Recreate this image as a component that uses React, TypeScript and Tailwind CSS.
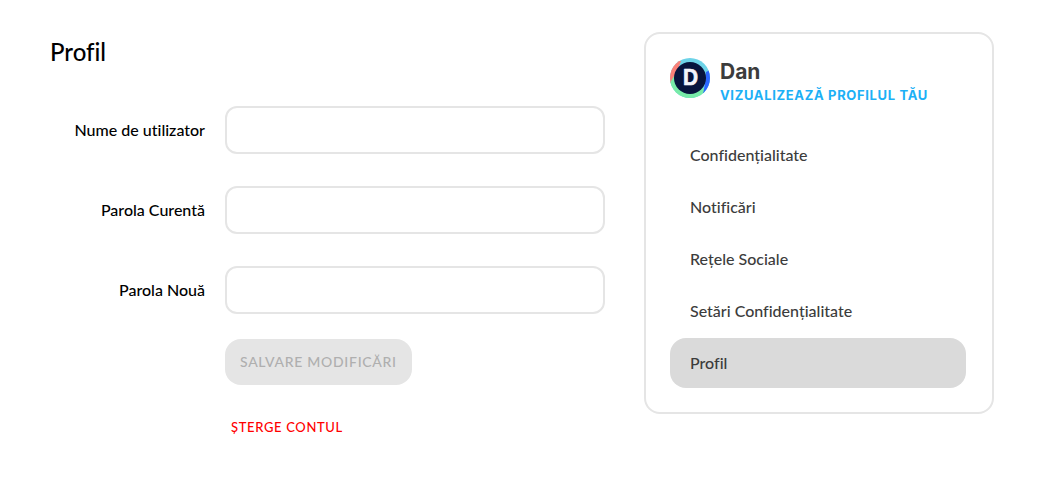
import { useId, useState } from 'react';

const links = ['Confidențialitate', 'Notificări', 'Rețele Sociale', 'Setări Confidențialitate', 'Profil'];

function Avatar() {
  return (
    <svg viewBox="0 0 40 40" className="size-10 shrink-0" role="img" aria-label="Dan">
      <defs>
        <clipPath id="avatar-clip">
          <circle cx="20" cy="20" r="20" />
        </clipPath>
      </defs>
      <g clipPath="url(#avatar-clip)">
        <rect width="40" height="40" fill="#6dd3e8" />
        <path d="M0 3H11L4 22L0 26Z" fill="#fa8078" />
        <path d="M0 25L4 18L18 32L36 30L34 40H0Z" fill="#78eba8" />
        <path d="M36 14L40 12V32L33 36L35 26Z" fill="#2b66ff" />
      </g>
      <circle cx="20" cy="20" r="16" fill="#07143d" />
      <text
        x="20.5"
        y="27"
        textAnchor="middle"
        fill="#f4f4fb"
        stroke="#f4f4fb"
        strokeWidth="0.6"
        strokeLinejoin="round"
        className="font-['Inter',sans-serif] text-[21px] font-bold"
      >
        D
      </text>
    </svg>
  );
}

function Field({ label, type, name }: { label: string; type: string; name: string }) {
  const id = useId();
  return (
    <div className="grid grid-cols-[155px_minmax(0,1fr)] items-center gap-5">
      <label htmlFor={id} className="text-right text-base leading-6 font-medium whitespace-nowrap">
        {label}
      </label>
      <input
        id={id}
        name={name}
        type={type}
        className="h-12 w-full rounded-xl border-2 border-[#e5e5e5] bg-white px-3 text-base outline-none focus:border-[#1cb0f6]"
      />
    </div>
  );
}

export default function App() {
  const [active, setActive] = useState('Profil');

  return (
    <div className="flex items-start gap-[39px] bg-white pt-8 pr-[70px] pb-8 pl-[50px] font-['Lato',sans-serif] text-black [font-variant-ligatures:none]">
      <main className="min-w-0 flex-1">
        <h1 className="text-2xl leading-10 font-medium">Profil</h1>
        <form className="mt-[34px]" onSubmit={(event) => event.preventDefault()}>
          <div className="flex flex-col gap-8">
            <Field label="Nume de utilizator" name="username" type="text" />
            <Field label="Parola Curentă" name="current-password" type="password" />
            <Field label="Parola Nouă" name="new-password" type="password" />
          </div>
          <div className="mt-[25px] ml-[175px] flex flex-col items-start gap-8">
            <button
              type="submit"
              disabled
              className="rounded-2xl bg-[#e5e5e5] px-[15px] py-[13px] text-sm leading-5 font-medium tracking-wider whitespace-nowrap text-[#afafaf] uppercase"
            >
              Salvare modificări
            </button>
            <button
              type="button"
              className="px-1.5 text-[13px] leading-5 font-medium tracking-wider text-[#ff0000] uppercase"
            >
              Șterge contul
            </button>
          </div>
        </form>
      </main>

      <aside className="w-[350px] shrink-0 rounded-2xl border-2 border-[#e5e5e5] py-6 pr-[26px] pl-6">
        <div className="flex h-10 items-start gap-2.5">
          <Avatar />
          <div className="font-['Inter',sans-serif] font-bold">
            <div className="text-[21px] leading-7 text-[#3c3c3c]">Dan</div>
            <a
              href="#profil"
              className="block text-[13px] leading-[18px] tracking-wider whitespace-nowrap text-[#1cb0f6] uppercase"
            >
              Vizualizează profilul tău
            </a>
          </div>
        </div>
        <nav className="mt-8 flex flex-col gap-0.5">
          {links.map((link) => (
            <a
              key={link}
              href="#"
              aria-current={link === active ? 'page' : undefined}
              onClick={(event) => {
                event.preventDefault();
                setActive(link);
              }}
              className="rounded-2xl px-5 py-[13px] text-base leading-6 font-medium text-[#3c3c3c] aria-[current=page]:bg-[#dadada]"
            >
              {link}
            </a>
          ))}
        </nav>
      </aside>
    </div>
  );
}
